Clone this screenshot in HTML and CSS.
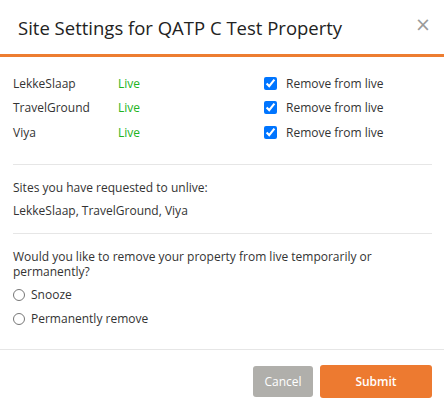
FILE: index.html
```html
<!DOCTYPE html>
<html>
<head>
<meta charset="utf-8">
<link rel="stylesheet" href="styles.css">
</head>
<body>
<div class="modal">
  <div class="modal-header">
    <h1 class="title">Site Settings for QATP C Test Property</h1>
    <span class="close">&times;</span>
  </div>
  <div class="section sites">
    <div class="site-row">
      <span class="site-name">LekkeSlaap</span>
      <span class="status">Live</span>
      <label class="remove"><input type="checkbox" checked><span>Remove from live</span></label>
    </div>
    <div class="site-row">
      <span class="site-name">TravelGround</span>
      <span class="status">Live</span>
      <label class="remove"><input type="checkbox" checked><span>Remove from live</span></label>
    </div>
    <div class="site-row">
      <span class="site-name">Viya</span>
      <span class="status">Live</span>
      <label class="remove"><input type="checkbox" checked><span>Remove from live</span></label>
    </div>
  </div>
  <div class="section requested">
    <p class="line">Sites you have requested to unlive:</p>
    <p class="line">LekkeSlaap, TravelGround, Viya</p>
  </div>
  <div class="section question">
    <p class="q-text">Would you like to remove your property from live temporarily or permanently?</p>
    <label class="option"><input type="radio" name="mode"><span>Snooze</span></label>
    <label class="option"><input type="radio" name="mode"><span>Permanently remove</span></label>
  </div>
  <div class="modal-footer">
    <button class="btn btn-cancel">Cancel</button>
    <button class="btn btn-submit">Submit</button>
  </div>
</div>
</body>
</html>
```
FILE: styles.css
```css
html, body {
  margin: 0;
  padding: 0;
  background: #fff;
}
body {
  font-family: "Open Sans", "Noto Sans", sans-serif;
  font-size: 12px;
  color: #333;
  width: 444px;
  height: 409px;
  overflow: hidden;
}
.modal {
  width: 444px;
}
.modal-header {
  position: relative;
  height: 54px;
  border-bottom: 3px solid #ed7d31;
  box-sizing: content-box;
  display: flex;
  align-items: center;
  padding: 0 18px;
}
.title {
  margin: 0;
  margin-top: 1px;
  font-size: 18.5px;
  font-weight: 400;
  color: #222;
}
.close {
  position: absolute;
  right: 13px;
  top: 14px;
  font-size: 19px;
  line-height: 20px;
  color: #9a9a9a;
  font-family: "DejaVu Sans", sans-serif;
}
.section {
  margin: 0 12px 0 13px;
  border-bottom: 1px solid #e6e6e6;
}
.sites {
  padding: 14px 0 19px;
}
.site-row {
  display: grid;
  grid-template-columns: 105px 146px auto;
  align-items: center;
  height: 24.5px;
}
.status {
  color: #22b422;
}
.remove {
  display: flex;
  align-items: center;
}
.remove input {
  margin: 0 9px 0 0;
  width: 13px;
  height: 13px;
}
.requested {
  padding: 13px 0 12px;
}
.line {
  margin: 0;
  line-height: 20px;
}
.line + .line {
  margin-top: 3px;
}
.question {
  border-bottom: none;
  padding: 15px 0 18px;
}
.q-text {
  margin: 0 0 4px;
  line-height: 15px;
  width: 400px;
}
.option {
  display: flex;
  align-items: center;
  height: 24px;
}
.option input {
  margin: 0 6px 0 0;
  width: 12px;
  height: 12px;
}
.modal-footer {
  border-top: 1px solid #e6e6e6;
  display: flex;
  justify-content: flex-end;
  align-items: center;
  gap: 7px;
  padding: 15px 12px 0;
  height: 33px;
}
.btn {
  border: none;
  border-radius: 3px;
  color: #fff;
  font-family: "Open Sans", "Noto Sans", sans-serif;
  font-size: 12px;
  cursor: pointer;
}
.btn-cancel {
  background: #b0afab;
  width: 60px;
  height: 31px;
}
.btn-submit {
  background: #ed7a30;
  width: 112px;
  height: 33px;
  font-weight: 600;
}
```
